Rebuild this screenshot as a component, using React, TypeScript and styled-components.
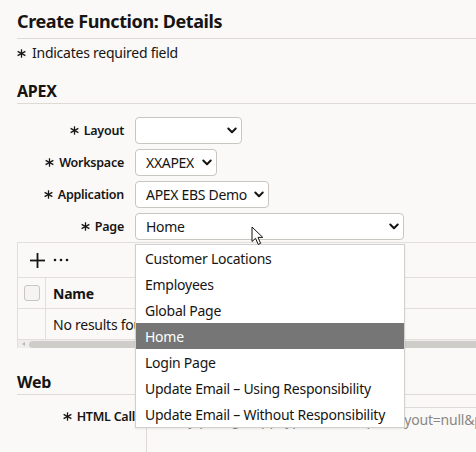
import React from "react";
import styled, { createGlobalStyle } from "styled-components";

const GlobalStyle = createGlobalStyle`
  html, body {
    margin: 0;
    padding: 0;
    background: #faf9f8;
  }
  body {
    font-family: "Noto Sans", "Open Sans", Arial, sans-serif;
    color: #161513;
    overflow: hidden;
  }
  * { box-sizing: border-box; }
`;

const Page = styled.div`
  width: 476px;
  height: 452px;
  overflow: hidden;
  padding-left: 17px;
`;

const Title = styled.h1`
  margin: 0;
  padding: 8px 0 4px;
  font-size: 18px;
  line-height: 26px;
  font-weight: 700;
  letter-spacing: -0.4px;
  color: #161513;
  border-bottom: 1px solid #dedbd7;
  white-space: nowrap;
`;

const Note = styled.div`
  display: flex;
  align-items: center;
  gap: 6px;
  padding-top: 4px;
  height: 24px;
  font-size: 14px;
  line-height: 20px;
  color: #161513;
  letter-spacing: -0.25px;
`;

const SectionHeading = styled.h2<{ $top: number }>`
  margin: ${(p) => p.$top}px 0 0;
  height: 25px;
  font-size: 16px;
  line-height: 24px;
  font-weight: 700;
  letter-spacing: -0.2px;
  border-bottom: 1px solid #dedbd7;
`;

const Form = styled.div`
  display: flex;
  flex-direction: column;
  gap: 5px;
  margin-top: 13px;
`;

const Row = styled.div<{ $label?: number }>`
  display: grid;
  grid-template-columns: ${(p) => p.$label ?? 107}px 1fr;
  column-gap: 11px;
  align-items: center;
`;

const Label = styled.div`
  display: flex;
  justify-content: flex-end;
  align-items: center;
  gap: 5px;
  font-size: 12.5px;
  font-weight: 600;
  color: #161513;
  white-space: nowrap;
  letter-spacing: -0.25px;
`;

const Field = styled.div`
  position: relative;
`;

const SelectBox = styled.div<{ $w: number }>`
  width: ${(p) => p.$w}px;
  height: 27px;
  display: flex;
  align-items: center;
  justify-content: space-between;
  padding: 0 4px 0 10px;
  background: #ffffff;
  border: 1px solid #c9c6c2;
  border-radius: 4px;
  font-size: 14px;
  color: #161513;
  white-space: nowrap;
  overflow: hidden;
  letter-spacing: -0.3px;
`;

const SelectText = styled.span`
  overflow: hidden;
`;

const Chevron = styled.svg`
  flex: none;
  width: 10px;
  height: 7px;
  margin-left: 5px;
`;

const Grid = styled.div`
  margin-top: 2px;
  border-top: 1px solid #e2dfdb;
  border-left: 1px solid #e2dfdb;
`;

const Toolbar = styled.div`
  height: 35px;
  display: flex;
  align-items: center;
  gap: 8px;
  padding-left: 12px;
  border-bottom: 1px solid #e2dfdb;
`;

const GridRow = styled.div`
  height: 31px;
  display: grid;
  grid-template-columns: 28px 1fr;
  border-bottom: 1px solid #e2dfdb;
`;

const Cell = styled.div<{ $head?: boolean }>`
  display: flex;
  align-items: center;
  padding-left: 7px;
  font-size: 14px;
  font-weight: ${(p) => (p.$head ? 700 : 400)};
  white-space: nowrap;
  overflow: hidden;
  letter-spacing: -0.25px;
`;

const SelectCell = styled.div`
  display: flex;
  align-items: center;
  justify-content: center;
  border-right: 1px solid #e2dfdb;
`;

const CheckBox = styled.div`
  width: 16px;
  height: 16px;
  border: 1px solid #c9c6c2;
  border-radius: 3px;
  background: #f5f4f2;
`;

const ScrollTrack = styled.div`
  position: relative;
  height: 8px;
  background: #eeedeb;
  display: flex;
  align-items: center;
  padding-left: 11px;
`;

const ScrollThumb = styled.div`
  flex: 1;
  height: 7px;
  border-radius: 4px 0 0 4px;
  background: #cfcdca;
`;

const ScrollArrow = styled.div`
  position: absolute;
  left: 4px;
  top: 2px;
  width: 0;
  height: 0;
  border-top: 2px solid transparent;
  border-bottom: 2px solid transparent;
  border-right: 3px solid #b9b7b4;
`;

const TextArea = styled.div`
  height: 60px;
  margin-top: 12px;
  padding: 2px 0 0 9px;
  border-top: 1px solid #dedbd7;
  border-left: 1px solid #dedbd7;
  font-size: 14px;
  color: #8a8783;
  white-space: nowrap;
  overflow: hidden;
  letter-spacing: -0.2px;
`;

const WebRow = styled(Row)`
  align-items: start;
`;

const WebLabel = styled(Label)`
  margin-top: 13px;
`;

const Menu = styled.ul`
  position: absolute;
  top: 31px;
  left: 0;
  width: 270px;
  margin: 0;
  padding: 0;
  list-style: none;
  background: #ffffff;
  border: 1px solid #d2d0cd;
  box-shadow: 0 1px 2px rgba(0, 0, 0, 0.08);
  z-index: 10;
`;

const MenuItem = styled.li<{ $active?: boolean }>`
  height: 26px;
  display: flex;
  align-items: center;
  padding-left: 9px;
  font-size: 14px;
  letter-spacing: -0.25px;
  white-space: nowrap;
  color: ${(p) => (p.$active ? "#ffffff" : "#161513")};
  background: ${(p) => (p.$active ? "#767676" : "transparent")};
`;

const Pointer = styled.svg`
  position: absolute;
  left: 116px;
  top: 13px;
  width: 13px;
  height: 20px;
  z-index: 20;
`;

const Star = ({ size = 9 }: { size?: number }) => (
  <svg width={size} height={size} viewBox="0 0 9 9" style={{ flex: "none" }}>
    <g stroke="#161513" strokeWidth="1.3" strokeLinecap="butt">
      <line x1="4.5" y1="0.3" x2="4.5" y2="8.7" />
      <line x1="0.6" y1="2.4" x2="8.4" y2="6.6" />
      <line x1="0.6" y1="6.6" x2="8.4" y2="2.4" />
    </g>
  </svg>
);

const Select = ({ w, value }: { w: number; value?: string }) => (
  <SelectBox $w={w}>
    <SelectText>{value ?? ""}</SelectText>
    <Chevron viewBox="0 0 10 7">
      <polyline
        points="1.3,1.5 5,5.2 8.7,1.5"
        fill="none"
        stroke="#161513"
        strokeWidth="2"
        strokeLinecap="round"
        strokeLinejoin="round"
      />
    </Chevron>
  </SelectBox>
);

const RequiredLabel = ({ children }: { children: React.ReactNode }) => (
  <Label>
    <Star />
    <span>{children}</span>
  </Label>
);

const pages = [
  "Customer Locations",
  "Employees",
  "Global Page",
  "Home",
  "Login Page",
  "Update Email \u2013 Using Responsibility",
  "Update Email \u2013 Without Responsibility",
];

export default function App() {
  return (
    <>
      <GlobalStyle />
      <Page>
        <Title>Create Function: Details</Title>
        <Note>
          <Star />
          <span>Indicates required field</span>
        </Note>

        <SectionHeading $top={16}>APEX</SectionHeading>
        <Form>
          <Row>
            <RequiredLabel>Layout</RequiredLabel>
            <Field>
              <Select w={107} />
            </Field>
          </Row>
          <Row>
            <RequiredLabel>Workspace</RequiredLabel>
            <Field>
              <Select w={82} value="XXAPEX" />
            </Field>
          </Row>
          <Row>
            <RequiredLabel>Application</RequiredLabel>
            <Field>
              <Select w={134} value="APEX EBS Demo" />
            </Field>
          </Row>
          <Row>
            <RequiredLabel>Page</RequiredLabel>
            <Field>
              <Select w={269} value="Home" />
              <Menu>
                {pages.map((p) => (
                  <MenuItem key={p} $active={p === "Home"}>
                    {p}
                  </MenuItem>
                ))}
              </Menu>
              <Pointer viewBox="0 0 13 20">
                <path
                  d="M1 1 L1 15.5 L4.6 12.3 L7.2 18.4 L9.6 17.4 L7 11.4 L11.8 11.4 Z"
                  fill="#ffffff"
                  stroke="#161513"
                  strokeWidth="1"
                  strokeLinejoin="round"
                />
              </Pointer>
            </Field>
          </Row>
        </Form>

        <Grid>
          <Toolbar>
            <svg width="15" height="15" viewBox="0 0 15 15">
              <g stroke="#161513" strokeWidth="1.8">
                <line x1="7.5" y1="0" x2="7.5" y2="15" />
                <line x1="0" y1="7.5" x2="15" y2="7.5" />
              </g>
            </svg>
            <svg width="16" height="4" viewBox="0 0 16 4">
              <g fill="#161513">
                <circle cx="2" cy="2" r="1.3" />
                <circle cx="8" cy="2" r="1.3" />
                <circle cx="14" cy="2" r="1.3" />
              </g>
            </svg>
          </Toolbar>
          <GridRow>
            <SelectCell>
              <CheckBox />
            </SelectCell>
            <Cell $head>Name</Cell>
          </GridRow>
          <GridRow>
            <SelectCell />
            <Cell>No results found.</Cell>
          </GridRow>
          <ScrollTrack>
            <ScrollArrow />
            <ScrollThumb />
          </ScrollTrack>
        </Grid>

        <SectionHeading $top={22}>Web</SectionHeading>
        <WebRow $label={118}>
          <WebLabel>
            <Star />
            <span>HTML Call</span>
          </WebLabel>
          <TextArea>GWY.jsp?targetAppType=APEX&amp;apexLayout=null&amp;p=101:1</TextArea>
        </WebRow>
      </Page>
    </>
  );
}
